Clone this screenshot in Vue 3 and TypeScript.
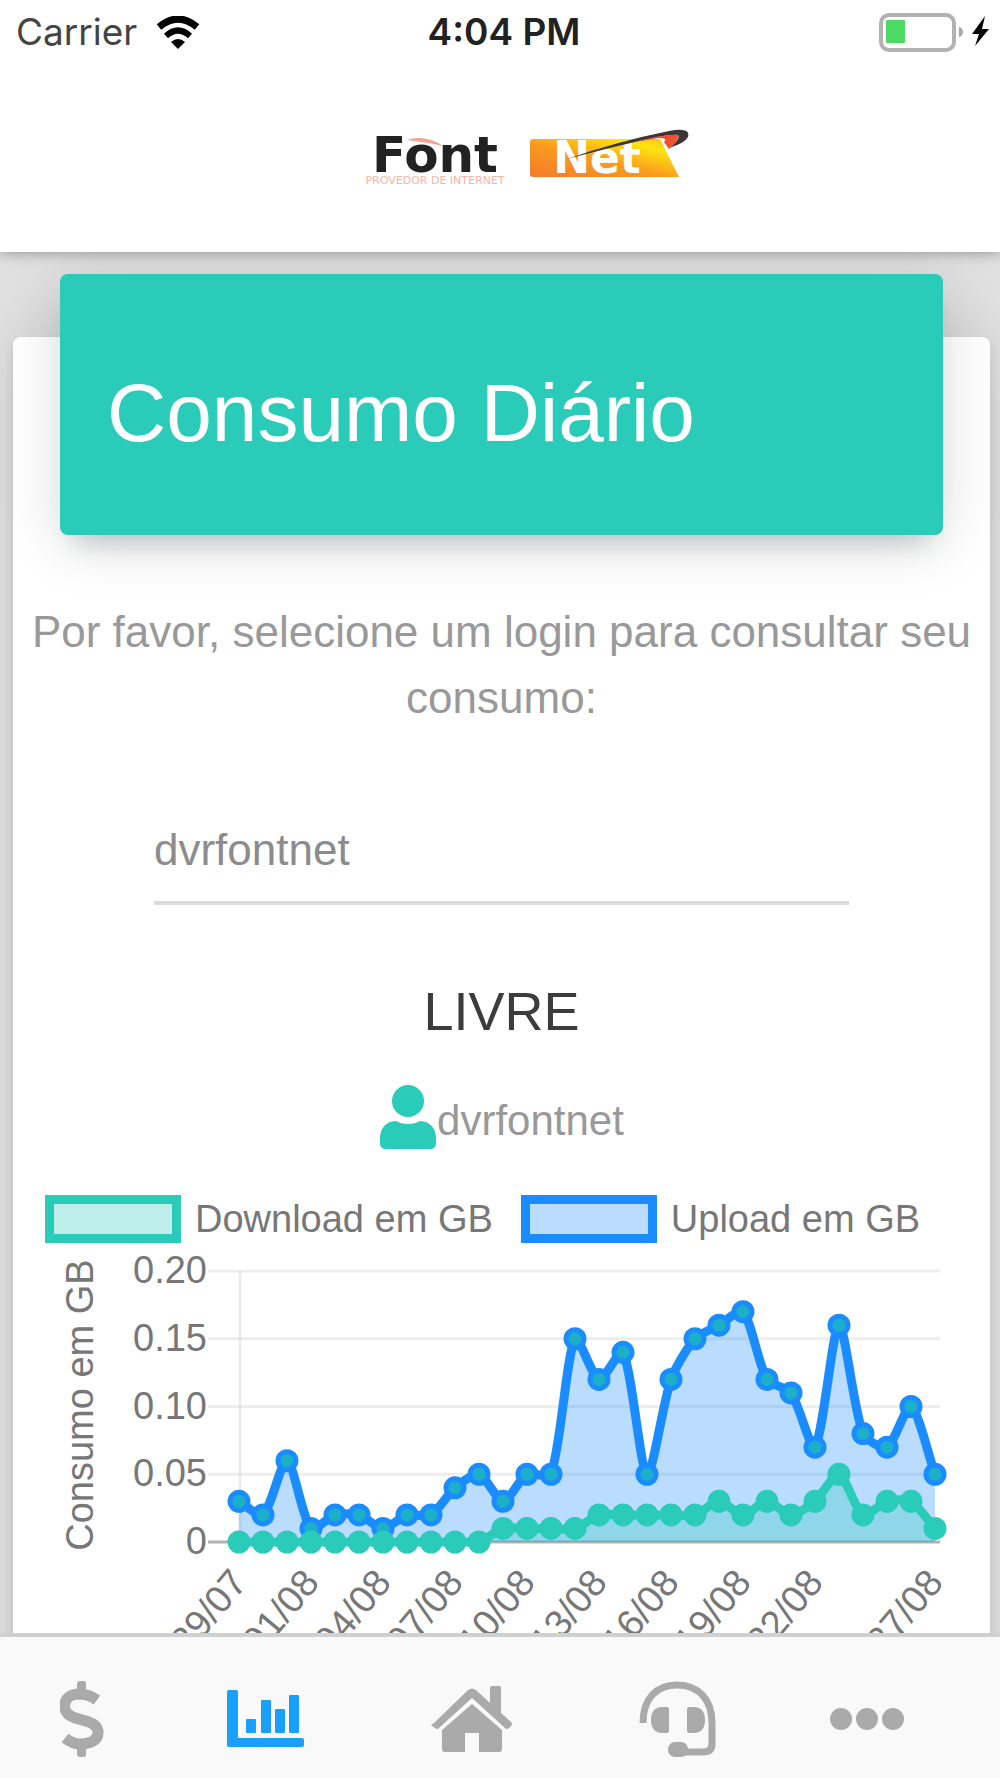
<script setup lang="ts">
import { computed, ref } from 'vue'

interface Point {
  x: number
  y: number
}

const logins = ['dvrfontnet']
const login = ref(logins[0])

const upload = [
  3, 2, 6, 1, 2, 2, 1, 2, 2, 4, 5, 3, 5, 5, 15,
  12, 14, 5, 12, 15, 16, 17, 12, 11, 7, 16, 8, 7, 10, 5,
]
const download = [
  0, 0, 0, 0, 0, 0, 0, 0, 0, 0, 0, 1, 1, 1, 1,
  2, 2, 2, 2, 2, 3, 2, 3, 2, 3, 5, 2, 3, 3, 1,
]

const plot = { left: 226, right: 922, top: 28, bottom: 299, max: 20 }

const yTicks = [
  { label: '0.20', value: 20 },
  { label: '0.15', value: 15 },
  { label: '0.10', value: 10 },
  { label: '0.05', value: 5 },
  { label: '0', value: 0 },
]
const xTicks = [
  { label: '29/07', index: 0 },
  { label: '01/08', index: 3 },
  { label: '04/08', index: 6 },
  { label: '07/08', index: 9 },
  { label: '10/08', index: 12 },
  { label: '13/08', index: 15 },
  { label: '16/08', index: 18 },
  { label: '19/08', index: 21 },
  { label: '22/08', index: 24 },
  { label: '27/08', index: 29 },
]

const xOf = (i: number) => plot.left + ((plot.right - plot.left) * i) / (upload.length - 1)
const yOf = (v: number) => plot.bottom - ((plot.bottom - plot.top) * v) / plot.max
const toPoints = (values: number[]): Point[] => values.map((v, i) => ({ x: xOf(i), y: yOf(v) }))

const uploadPoints = computed(() => toPoints(upload))
const downloadPoints = computed(() => toPoints(download))

// Cardinal spline whose handles stay inside the plot area.
function curve(points: Point[], tension = 0.25): string {
  const clamp = (y: number) => Math.min(plot.bottom, Math.max(plot.top, y))
  const handles = points.map((p, i) => {
    const prev = points[i - 1] ?? p
    const next = points[i + 1] ?? p
    const before = Math.hypot(p.x - prev.x, p.y - prev.y)
    const after = Math.hypot(next.x - p.x, next.y - p.y)
    const a = (tension * before) / (before + after)
    const b = (tension * after) / (before + after)
    return {
      inX: p.x - a * (next.x - prev.x),
      inY: clamp(p.y - a * (next.y - prev.y)),
      outX: p.x + b * (next.x - prev.x),
      outY: clamp(p.y + b * (next.y - prev.y)),
    }
  })
  return points.reduce((d, p, i) => {
    if (i === 0) return `M${p.x} ${p.y}`
    const from = handles[i - 1]
    const to = handles[i]
    return `${d}C${from.outX} ${from.outY} ${to.inX} ${to.inY} ${p.x} ${p.y}`
  }, '')
}

const area = (points: Point[]) =>
  `${curve(points)}L${plot.right} ${plot.bottom}L${plot.left} ${plot.bottom}Z`
</script>

<template>
  <div class="app">
    <header class="top">
      <div class="status">
        <div class="status-left">
          <span>Carrier</span>
          <svg class="wifi" viewBox="0 0 44 33" aria-hidden="true">
            <path d="M3 11Q22-5 41 11" fill="none" stroke="#000" stroke-width="7" />
            <path d="M10 20Q22 9 34 20" fill="none" stroke="#000" stroke-width="6" />
            <path d="M22 33L15 26Q22 20 29 26Z" />
          </svg>
        </div>
        <span class="clock">4:04 PM</span>
        <svg class="battery" viewBox="0 0 114 40" aria-hidden="true">
          <rect x="3" y="3" width="73" height="35" rx="8" fill="#fff" stroke="#b2b2b2" stroke-width="4" />
          <rect x="8" y="8" width="19" height="23" rx="1" fill="#4cd964" />
          <path d="M81 15Q85 16 85 20Q85 24 81 25Z" fill="#a8a8a8" />
          <path d="M107 4L94 22H101L97 34L111 17H104Z" fill="#000" />
        </svg>
      </div>
      <div class="brand">
        <svg class="logo" viewBox="0 0 372 60" role="img" aria-label="FontNet Provedor de Internet">
          <defs>
            <linearGradient id="plate" x1="0" y1="1" x2="1" y2="0">
              <stop offset="0" stop-color="#f47a2c" />
              <stop offset=".45" stop-color="#f99a1e" />
              <stop offset=".8" stop-color="#ffe611" />
              <stop offset="1" stop-color="#fbb01c" />
            </linearGradient>
          </defs>
          <path d="M214 13H341L360 51H214Q211 51 211 48V16Q211 13 214 13Z" fill="url(#plate)" />
          <text class="logo-word" x="116" y="46" text-anchor="middle">Font</text>
          <path d="M88 14Q106 8 124 20Q106 16 88 14Z" fill="#f7a090" />
          <text class="logo-word logo-net" x="278" y="47" text-anchor="middle">Net</text>
          <text class="logo-tag" x="116" y="58" text-anchor="middle">PROVEDOR DE INTERNET</text>
          <path d="M248 33Q300 15 350 5Q372 1 369 11Q366 17 350 22Q362 13 359 9Q350 6 248 33Z" fill="#3a3635" />
          <path d="M310 17Q350 7 359 9Q361 13 350 23L345 16Q349 12 340 12Z" fill="#ee5030" />
        </svg>
      </div>
    </header>

    <main class="content">
      <section class="card">
        <div class="card-header">
          <h1>Consumo Diário</h1>
        </div>

        <label class="prompt" for="login">Por favor, selecione um login para consultar seu consumo:</label>
        <select id="login" v-model="login" class="login">
          <option v-for="item in logins" :key="item" :value="item">{{ item }}</option>
        </select>

        <h2 class="plan">LIVRE</h2>
        <p class="user">
          <svg class="user-icon" viewBox="0 0 58 66" aria-hidden="true">
            <circle cx="29" cy="17" r="16" />
            <path d="M17 37C24 41 34 41 41 37C52 37 57 46 57 54V59Q57 65 51 65H7Q1 65 1 59V54C1 46 6 37 17 37Z" />
          </svg>
          <span>{{ login }}</span>
        </p>

        <ul class="legend">
          <li><i class="swatch swatch-down"></i>Download em GB</li>
          <li><i class="swatch swatch-up"></i>Upload em GB</li>
        </ul>

        <svg class="chart" viewBox="0 0 977 450" role="img" aria-label="Consumo em GB por dia">
          <g class="grid">
            <line
              v-for="t in yTicks"
              :key="t.label"
              :class="{ zero: t.value === 0 }"
              x1="195"
              x2="927"
              :y1="yOf(t.value)"
              :y2="yOf(t.value)"
            />
            <line :x1="plot.left + 1" :x2="plot.left + 1" :y1="plot.top" :y2="plot.bottom" />
          </g>

          <g class="ticks">
            <text v-for="t in yTicks" :key="t.label" x="194" :y="yOf(t.value) + 12" text-anchor="end">{{ t.label }}</text>
            <text
              v-for="t in xTicks"
              :key="t.label"
              :transform="`translate(${xOf(t.index)} 332) rotate(-50)`"
              x="0"
              y="13"
              text-anchor="end"
            >{{ t.label }}</text>
            <text transform="translate(80 162) rotate(-90)" x="0" y="0" text-anchor="middle">Consumo em GB</text>
          </g>

          <g class="series upload">
            <path class="area" :d="area(uploadPoints)" />
            <path class="line" :d="curve(uploadPoints)" />
            <circle v-for="p in uploadPoints" :key="p.x" :cx="p.x" :cy="p.y" r="9" />
          </g>
          <g class="series download">
            <path class="area" :d="area(downloadPoints)" />
            <path class="line" :d="curve(downloadPoints)" />
            <circle v-for="p in downloadPoints" :key="p.x" :cx="p.x" :cy="p.y" r="9" />
          </g>
        </svg>
      </section>
    </main>

    <nav class="tabs">
      <button type="button" aria-label="Faturas">
        <svg width="44" height="78" viewBox="0 0 44 78">
          <path d="M37 20C29 14 22 14 18 14C2 15 1 31 11 36C19 41 36 40 38 51C39 62 27 64 20 64C14 64 10 62 5 58" fill="none" stroke="currentColor" stroke-width="11" />
          <path d="M17 4Q17 1 20 1H24Q26 1 26 4V14H17ZM17 63H26V74Q26 77 24 77H20Q17 77 17 74Z" />
        </svg>
      </button>
      <button type="button" class="active" aria-label="Consumo" aria-current="page">
        <svg width="78" height="60" viewBox="0 0 78 60">
          <path d="M2 1H9Q11 1 11 3V49H75Q77 49 77 51V56Q77 58 75 58H2Q0 58 0 56V3Q0 1 2 1Z" />
          <rect x="19" y="30" width="10" height="14" rx="1" />
          <rect x="34" y="11" width="10" height="33" rx="1" />
          <rect x="48" y="20" width="10" height="24" rx="1" />
          <rect x="62" y="6" width="10" height="38" rx="1" />
        </svg>
      </button>
      <button type="button" aria-label="Início">
        <svg width="84" height="68" viewBox="0 0 84 68">
          <path d="M4 38L37 6Q42 1 47 6L60 18V3Q60 1 62 1H69Q71 1 71 3V28L81 37Q83 39 81 41L79 43Q77 45 75 43L42 13L9 43Q7 45 5 43L1 40Q2 39 4 38Z" />
          <path d="M42 19L72 45V64Q72 67 69 67H49V48H35V67H15Q12 67 12 64V45Z" />
        </svg>
      </button>
      <button type="button" aria-label="Suporte">
        <svg width="78" height="78" viewBox="0 0 78 78">
          <path d="M4 43C4 19 17 5 38 5C60 5 73 20 73 43V64Q73 72 64 72H40" fill="none" stroke="currentColor" stroke-width="7" />
          <path d="M28 27H22Q12 28 12 40Q12 52 22 53H28Q30 53 30 50V30Q30 27 28 27ZM50 27H56Q66 28 66 40Q66 52 56 53H50Q48 53 48 50V30Q48 27 50 27Z" />
          <rect x="29" y="62" width="20" height="15" rx="7" />
        </svg>
      </button>
      <button type="button" aria-label="Mais">
        <svg width="74" height="22" viewBox="0 0 74 22">
          <circle cx="11" cy="11" r="11" />
          <circle cx="37" cy="11" r="11" />
          <circle cx="63" cy="11" r="11" />
        </svg>
      </button>
    </nav>
  </div>
</template>

<style>
body {
  margin: 0;
}
</style>

<style scoped>
.app {
  display: flex;
  flex-direction: column;
  height: 100vh;
  background: #e0e0e0;
  color: #999;
  font-family: "Liberation Sans", Arial, Helvetica, sans-serif;
}

.top {
  position: relative;
  z-index: 1;
  flex: none;
  background: #fff;
  box-shadow: 0 2px 12px rgba(0, 0, 0, 0.3);
}

.status {
  display: grid;
  grid-template-columns: 1fr auto 1fr;
  align-items: center;
  height: 64px;
  padding: 0 8px 0 16px;
  color: #444;
  font: 37px/44px Inter, sans-serif;
}

.status-left {
  display: flex;
  align-items: center;
  gap: 19px;
}

.wifi {
  width: 44px;
  height: 33px;
}

.clock {
  color: #222;
  font-weight: 600;
}

.battery {
  justify-self: end;
  width: 114px;
  height: 40px;
}

.brand {
  display: flex;
  justify-content: center;
  padding: 62px 0 66px 10px;
}

.logo {
  width: 372px;
  height: 60px;
  overflow: visible;
}

.logo-word {
  fill: #222;
  font: bold 50px "DejaVu Sans", sans-serif;
}

.logo-net {
  fill: #fff;
  font-size: 44px;
}

.logo-tag {
  fill: #f9b4a8;
  font: 11px "DejaVu Sans", sans-serif;
}

.content {
  flex: 1;
  min-height: 0;
  overflow-x: hidden;
  overflow-y: auto;
  scrollbar-width: none;
}

.card {
  display: flex;
  flex-direction: column;
  margin: 85px 10px 32px 13px;
  border-radius: 8px;
  background: #fff;
  box-shadow: 0 6px 10px rgba(0, 0, 0, 0.1), 0 4px 60px rgba(0, 0, 0, 0.1);
}

.card-header {
  margin: -63px 47px 0;
  padding: 90px 47px 73px;
  border-radius: 8px;
  background: #2bcbba;
  box-shadow: 0 22px 24px -16px rgba(60, 90, 95, 0.28), 0 8px 60px rgba(0, 0, 0, 0.14);
}

h1 {
  margin: 0;
  color: #fff;
  font-size: 82px;
  font-weight: 400;
  line-height: 98px;
}

.prompt {
  margin-top: 64px;
  padding: 0 10px;
  font-size: 44px;
  line-height: 66px;
  text-align: center;
}

.login {
  height: 100px;
  margin: 74px 141px 0;
  padding: 0 0 7px;
  border: 0;
  border-bottom: 4px solid #dcdcdc;
  border-radius: 0;
  outline: 0;
  appearance: none;
  background: none;
  color: #8c8c8c;
  font: 44px "Liberation Sans", Arial, sans-serif;
}

.plan {
  margin: 74px 0 0;
  color: #3c3c3c;
  font-size: 54px;
  font-weight: 400;
  line-height: 64px;
  text-align: center;
}

.user {
  display: flex;
  align-items: flex-end;
  justify-content: center;
  margin: 41px 0 0;
  font-size: 42px;
  line-height: 58px;
}

.user-icon {
  width: 58px;
  height: 66px;
  fill: #2bcbba;
}

.legend {
  display: flex;
  gap: 28px;
  margin: 45px 0 0;
  padding: 0 32px;
  color: #777;
  font-size: 38px;
  line-height: 48px;
  list-style: none;
}

.legend li {
  display: flex;
  gap: 14px;
  white-space: nowrap;
}

.swatch {
  box-sizing: border-box;
  width: 136px;
  height: 48px;
  border: 9px solid;
}

.swatch-down {
  border-color: #2bcbba;
  background: #bfefea;
}

.swatch-up {
  border-color: #1a8cff;
  background: #badcff;
}

.chart {
  display: block;
  width: 100%;
}

.grid line {
  stroke: rgba(0, 0, 0, 0.07);
  stroke-width: 3;
}

.grid .zero {
  stroke: rgba(0, 0, 0, 0.3);
}

.ticks {
  fill: #777;
  font-size: 38px;
}

.area {
  fill-opacity: 0.3;
}

.line {
  fill: none;
  stroke-width: 9;
  stroke-linejoin: round;
}

.series circle {
  stroke-width: 5;
}

.upload {
  fill: #1a8cff;
  stroke: #1a8cff;
}

.download {
  fill: #2bcbba;
  stroke: #2bcbba;
}

.upload circle {
  fill: #1bb0c8;
}

.series .area {
  stroke: none;
}

.series .line {
  fill: none;
}

.tabs {
  position: relative;
  display: grid;
  flex: none;
  grid-template-columns: 163fr 206fr 206fr 206fr 172fr;
  align-items: center;
  box-sizing: border-box;
  height: 145px;
  padding: 22px 47px 0 0;
  border-top: 4px solid #d0d0d0;
  background: #f9f9f9;
}

.tabs button {
  display: flex;
  justify-content: center;
  padding: 0;
  border: 0;
  background: none;
  color: #aaa;
  cursor: pointer;
}

.tabs .active {
  color: #18a0ff;
}

.tabs svg {
  fill: currentColor;
}
</style>
